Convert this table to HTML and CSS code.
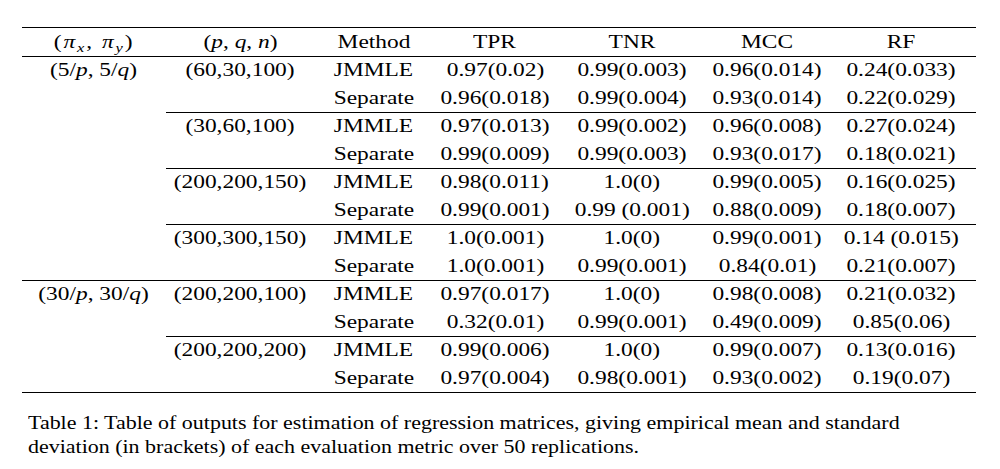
FILE: index.html
```html
<!DOCTYPE html>
<html lang="en">
<head>
<meta charset="utf-8">
<title>Table 1</title>
<link rel="stylesheet" href="styles.css">
</head>
<body>
<div class="page">
  <div class="table">
    <div class="row head">
      <div class="c"><span class="s wide">(<i>π</i><sub>x</sub>, <i>π</i><sub>y</sub>)</span></div>
      <div class="c"><span class="s">(<i>p</i>, <i>q</i>, <i>n</i>)</span></div>
      <div class="c"><span class="s">Method</span></div>
      <div class="c"><span class="s">TPR</span></div>
      <div class="c"><span class="s">TNR</span></div>
      <div class="c"><span class="s">MCC</span></div>
      <div class="c"><span class="s">RF</span></div>
    </div>

    <div class="block">
      <div class="pi"><span class="s">(5/<i>p</i>, 5/<i>q</i>)</span></div>
      <div class="subs">
        <div class="sub">
          <div class="row"><div class="c"><span class="s">(60,30,100)</span></div><div class="c"><span class="s">JMMLE</span></div><div class="c"><span class="s">0.97(0.02)</span></div><div class="c"><span class="s">0.99(0.003)</span></div><div class="c"><span class="s">0.96(0.014)</span></div><div class="c"><span class="s">0.24(0.033)</span></div></div>
          <div class="row"><div class="c"></div><div class="c"><span class="s">Separate</span></div><div class="c"><span class="s">0.96(0.018)</span></div><div class="c"><span class="s">0.99(0.004)</span></div><div class="c"><span class="s">0.93(0.014)</span></div><div class="c"><span class="s">0.22(0.029)</span></div></div>
        </div>
        <div class="sub">
          <div class="row"><div class="c"><span class="s">(30,60,100)</span></div><div class="c"><span class="s">JMMLE</span></div><div class="c"><span class="s">0.97(0.013)</span></div><div class="c"><span class="s">0.99(0.002)</span></div><div class="c"><span class="s">0.96(0.008)</span></div><div class="c"><span class="s">0.27(0.024)</span></div></div>
          <div class="row"><div class="c"></div><div class="c"><span class="s">Separate</span></div><div class="c"><span class="s">0.99(0.009)</span></div><div class="c"><span class="s">0.99(0.003)</span></div><div class="c"><span class="s">0.93(0.017)</span></div><div class="c"><span class="s">0.18(0.021)</span></div></div>
        </div>
        <div class="sub">
          <div class="row"><div class="c"><span class="s">(200,200,150)</span></div><div class="c"><span class="s">JMMLE</span></div><div class="c"><span class="s">0.98(0.011)</span></div><div class="c"><span class="s">1.0(0)</span></div><div class="c"><span class="s">0.99(0.005)</span></div><div class="c"><span class="s">0.16(0.025)</span></div></div>
          <div class="row"><div class="c"></div><div class="c"><span class="s">Separate</span></div><div class="c"><span class="s">0.99(0.001)</span></div><div class="c"><span class="s">0.99 (0.001)</span></div><div class="c"><span class="s">0.88(0.009)</span></div><div class="c"><span class="s">0.18(0.007)</span></div></div>
        </div>
        <div class="sub">
          <div class="row"><div class="c"><span class="s">(300,300,150)</span></div><div class="c"><span class="s">JMMLE</span></div><div class="c"><span class="s">1.0(0.001)</span></div><div class="c"><span class="s">1.0(0)</span></div><div class="c"><span class="s">0.99(0.001)</span></div><div class="c"><span class="s">0.14 (0.015)</span></div></div>
          <div class="row"><div class="c"></div><div class="c"><span class="s">Separate</span></div><div class="c"><span class="s">1.0(0.001)</span></div><div class="c"><span class="s">0.99(0.001)</span></div><div class="c"><span class="s">0.84(0.01)</span></div><div class="c"><span class="s">0.21(0.007)</span></div></div>
        </div>
      </div>
    </div>

    <div class="block">
      <div class="pi"><span class="s">(30/<i>p</i>, 30/<i>q</i>)</span></div>
      <div class="subs">
        <div class="sub">
          <div class="row"><div class="c"><span class="s">(200,200,100)</span></div><div class="c"><span class="s">JMMLE</span></div><div class="c"><span class="s">0.97(0.017)</span></div><div class="c"><span class="s">1.0(0)</span></div><div class="c"><span class="s">0.98(0.008)</span></div><div class="c"><span class="s">0.21(0.032)</span></div></div>
          <div class="row"><div class="c"></div><div class="c"><span class="s">Separate</span></div><div class="c"><span class="s">0.32(0.01)</span></div><div class="c"><span class="s">0.99(0.001)</span></div><div class="c"><span class="s">0.49(0.009)</span></div><div class="c"><span class="s">0.85(0.06)</span></div></div>
        </div>
        <div class="sub">
          <div class="row"><div class="c"><span class="s">(200,200,200)</span></div><div class="c"><span class="s">JMMLE</span></div><div class="c"><span class="s">0.99(0.006)</span></div><div class="c"><span class="s">1.0(0)</span></div><div class="c"><span class="s">0.99(0.007)</span></div><div class="c"><span class="s">0.13(0.016)</span></div></div>
          <div class="row"><div class="c"></div><div class="c"><span class="s">Separate</span></div><div class="c"><span class="s">0.97(0.004)</span></div><div class="c"><span class="s">0.98(0.001)</span></div><div class="c"><span class="s">0.93(0.002)</span></div><div class="c"><span class="s">0.19(0.07)</span></div></div>
        </div>
      </div>
    </div>
  </div>

  <div class="caption">
    <span class="line">Table 1: Table of outputs for estimation of regression matrices, giving empirical mean and standard</span>
    <span class="line">deviation (in brackets) of each evaluation metric over 50 replications.</span>
  </div>
</div>
</body>
</html>
```

FILE: styles.css
```css
html, body {
  margin: 0;
  padding: 0;
  background: #ffffff;
}

body {
  color: #000000;
  font-family: "Liberation Serif", "Times New Roman", serif;
  font-size: 18px;
}

.page {
  padding: 27px 0 0 22px;
}

.table {
  width: 954px;
  border-top: 1px solid #000;
}

.row {
  display: grid;
  grid-template-columns: 148px 120px 122px 152px 118px 150px;
  align-items: center;
  height: 27px;
}

.row + .row {
  height: 28px;
}

.row.head {
  grid-template-columns: 144px 148px 120px 122px 152px 118px 150px;
  height: 28px;
  border-bottom: 1px solid #000;
}

.c {
  text-align: center;
  white-space: nowrap;
}

.s {
  display: inline-block;
  white-space: pre;
  transform: scaleX(1.3);
}

.s.wide {
  letter-spacing: 1.5px;
}

.block {
  display: grid;
  grid-template-columns: 144px 810px;
  border-bottom: 1px solid #000;
}

.pi {
  height: 27px;
  display: flex;
  align-items: center;
  justify-content: center;
}

.sub {
  border-bottom: 1px solid #000;
}

.sub:last-child {
  border-bottom: none;
}

i {
  font-style: italic;
}

sub {
  font-style: italic;
  font-size: 0.7em;
  vertical-align: -0.3em;
  line-height: 0;
}

.caption {
  margin-top: 18px;
  padding-left: 6px;
  line-height: 24px;
  display: flex;
  flex-direction: column;
  align-items: flex-start;
}

.caption .line {
  display: inline-block;
  white-space: nowrap;
  transform: scaleX(1.22);
  transform-origin: 0 50%;
}
```
